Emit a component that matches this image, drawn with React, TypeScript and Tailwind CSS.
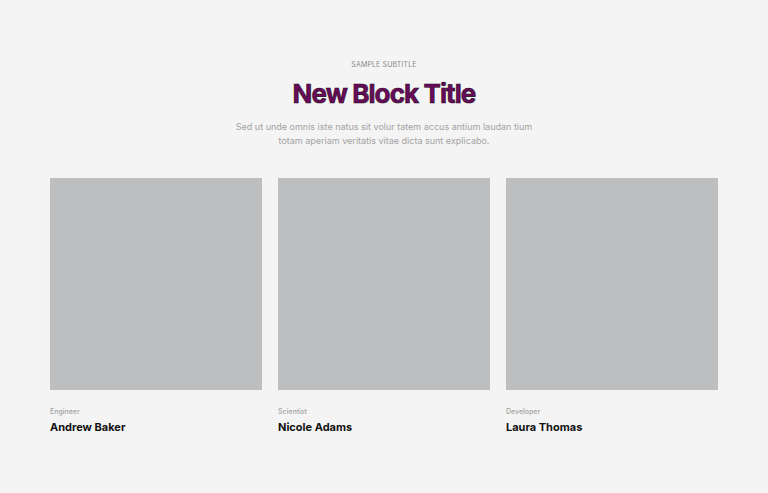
import React from 'react';

const members = [
  { role: 'Engineer', name: 'Andrew Baker' },
  { role: 'Scientist', name: 'Nicole Adams' },
  { role: 'Developer', name: 'Laura Thomas' },
];

export default function App() {
  return (
    <div className="min-h-[493px] w-full bg-[#f4f4f4] font-['Inter',sans-serif]">
      <div className="px-[50px] pt-[60px] pb-[50px]">
        {/* Header */}
        <div className="flex flex-col items-center text-center">
          <p className="text-[7px] leading-[10px] uppercase tracking-[0.02em] text-[#8a8a8a]">Sample Subtitle</p>
          <h1 className="mt-[7px] text-[26px] leading-[34px] font-bold tracking-[-0.035em] text-[#6a0a5a] [-webkit-text-stroke:0.6px_#1a0a18]">
            New Block Title
          </h1>
          <p className="mt-[9px] w-[300px] text-[9px] leading-[14px] text-[#a3a3a3]">
            Sed ut unde omnis iste natus sit volur tatem accus antium laudan tium totam aperiam veritatis vitae dicta sunt explicabo.
          </p>
        </div>

        {/* Cards */}
        <div className="mt-[30px] grid grid-cols-3 gap-4">
          {members.map((m) => (
            <div key={m.name}>
              <div className="aspect-square w-full bg-[#bdbebf]" />
              <p className="mt-[17px] text-[7px] leading-[10px] font-medium text-[#a3a3a3]">{m.role}</p>
              <p className="mt-[3px] text-[11px] leading-[14px] font-bold text-[#111]">{m.name}</p>
            </div>
          ))}
        </div>
      </div>
    </div>
  );
}
